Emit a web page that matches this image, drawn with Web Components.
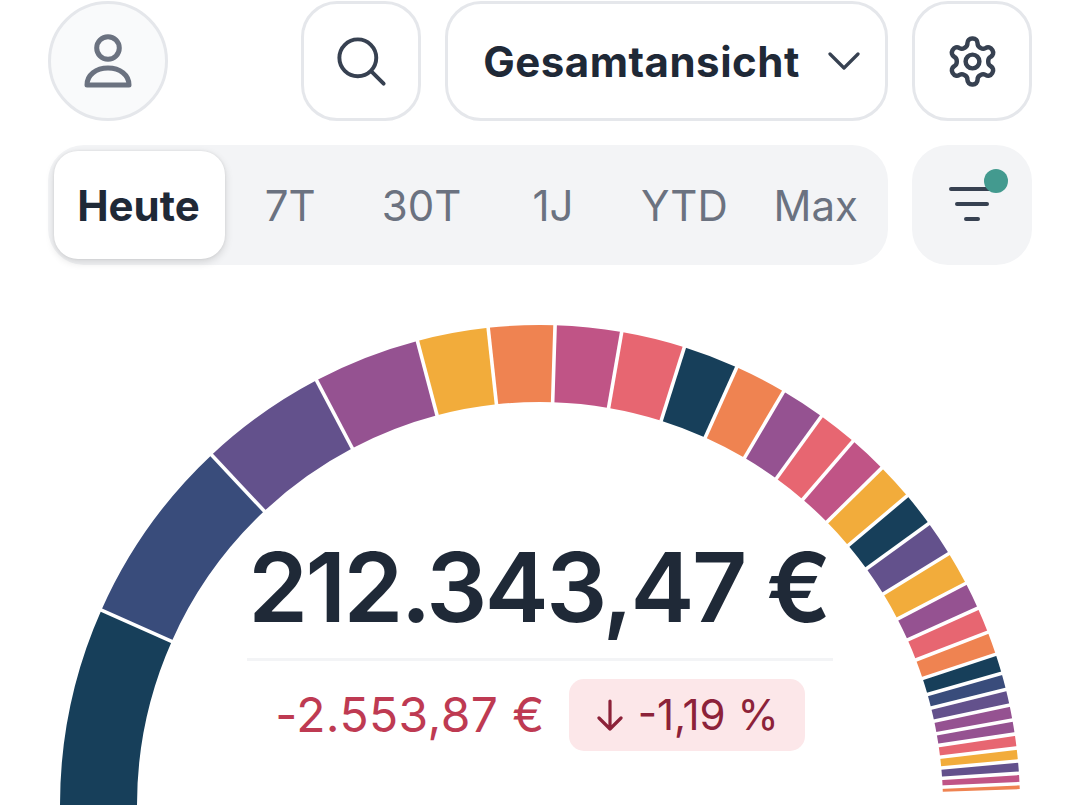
<!DOCTYPE html>
<html lang="de"><head><meta charset="utf-8"><title>Gesamtansicht</title>
<style>
html,body{margin:0;padding:0;background:#fff;overflow:hidden}
body{font-family:Inter,"Liberation Sans",sans-serif;color:#1f2937}
</style></head><body>
<portfolio-app>
  <top-bar></top-bar>
  <range-bar></range-bar>
  <value-gauge amount="212.343,47 €" delta="-2.553,87 €" percent="-1,19 %"></value-gauge>
</portfolio-app>
<script>
function shadow(el, html){ el.attachShadow({mode:'open'}).innerHTML = html; }

customElements.define('portfolio-app', class extends HTMLElement{
  constructor(){super();shadow(this,`<style>:host{display:flex;flex-direction:column;width:1079px;height:806px;overflow:hidden;padding-top:1px;box-sizing:border-box}</style><slot></slot>`);}
});

customElements.define('square-button', class extends HTMLElement{
  constructor(){super();shadow(this,`<style>
  :host{display:flex;align-items:center;justify-content:center;position:relative;width:120px;height:120px;box-sizing:border-box;border:3px solid #e5e7eb;border-radius:36px;background:#fff;color:#374151;flex:none}
  :host([round]){border-radius:50%;background:#f9fafb;color:#6b7280}
  :host([filled]){border:0;background:#f3f4f6}
  :host([wide]){width:443px;gap:28px;padding-left:10px}
  </style><slot></slot>`);}
});

customElements.define('top-bar', class extends HTMLElement{
  constructor(){super();shadow(this,`<style>
  :host{display:flex;gap:24px;padding:0 47px 0 48px;align-items:center}
  .sp{flex:1}
  svg{display:block;fill:none;stroke:currentColor;stroke-linecap:round;stroke-linejoin:round}
  .t{font:700 42px/1 Inter,sans-serif;color:#1f2937;letter-spacing:.5px;white-space:nowrap;position:relative;top:1px}
  </style>
  <square-button round><svg width="64" height="64" viewBox="0 0 64 64" stroke-width="5"><circle cx="32" cy="19" r="11.3"/><path d="M11 56C11 46 20 39 32 39S53 46 53 56Z"/></svg></square-button>
  <div class="sp"></div>
  <square-button><svg width="59" height="59" viewBox="0 0 24 24" stroke-width="1.6"><path d="M21 21l-5.197-5.197m0 0A7.5 7.5 0 105.196 5.196a7.5 7.5 0 0010.607 10.607z"/></svg></square-button>
  <square-button wide><span class="t">Gesamtansicht</span><svg width="32" height="20" viewBox="0 0 32 20" stroke-width="3.2"><path d="M2 3L16 17L30 3"/></svg></square-button>
  <square-button><svg width="55" height="55" viewBox="0 0 24 24" stroke-width="1.95"><path d="M12.22 2h-.44a2 2 0 0 0-2 2v.18a2 2 0 0 1-1 1.73l-.43.25a2 2 0 0 1-2 0l-.15-.08a2 2 0 0 0-2.73.73l-.22.38a2 2 0 0 0 .73 2.73l.15.1a2 2 0 0 1 1 1.72v.51a2 2 0 0 1-1 1.74l-.15.09a2 2 0 0 0-.73 2.73l.22.38a2 2 0 0 0 2.73.73l.15-.08a2 2 0 0 1 2 0l.43.25a2 2 0 0 1 1 1.73V20a2 2 0 0 0 2 2h.44a2 2 0 0 0 2-2v-.18a2 2 0 0 1 1-1.73l.43-.25a2 2 0 0 1 2 0l.15.08a2 2 0 0 0 2.73-.73l.22-.39a2 2 0 0 0-.73-2.73l-.15-.08a2 2 0 0 1-1-1.74v-.5a2 2 0 0 1 1-1.74l.15-.09a2 2 0 0 0 .73-2.73l-.22-.38a2 2 0 0 0-2.73-.73l-.15.08a2 2 0 0 1-2 0l-.43-.25a2 2 0 0 1-1-1.73V4a2 2 0 0 0-2-2z"/><circle cx="12" cy="12" r="3"/></svg></square-button>`);}
});

customElements.define('range-bar', class extends HTMLElement{
  constructor(){super();shadow(this,`<style>
  :host{display:flex;gap:24px;padding:0 47px 0 48px;margin-top:24px}
  .seg{flex:1;display:flex;height:120px;box-sizing:border-box;padding:6px;background:#f3f4f6;border-radius:36px;font:400 42px/1 Inter,sans-serif;color:#6b7280}
  .seg span{flex:1;display:flex;align-items:center;justify-content:center;white-space:nowrap;padding:2px 1px 0 0}
  .seg .on{flex:none;width:171px;padding-right:2px;box-sizing:border-box;background:#fff;border-radius:24px;color:#1f2937;font-weight:700;box-shadow:0 3px 9px rgba(0,0,0,.14),0 0 3px rgba(0,0,0,.08)}
  .ico{position:relative}
  svg{display:block;fill:none;stroke:#374151;stroke-width:4;stroke-linecap:round}
  .dot{position:absolute;left:72px;top:24px;width:24px;height:24px;border-radius:50%;background:#439a8f}
  </style>
  <div class="seg"><span class="on">Heute</span><span>7T</span><span>30T</span><span>1J</span><span>YTD</span><span>Max</span></div>
  <square-button filled class="ico"><svg width="48" height="40" viewBox="0 0 48 40"><path d="M3 4H45M9 19H39M18 34H30"/></svg><i class="dot"></i></square-button>`);}
});

customElements.define('value-gauge', class extends HTMLElement{
  constructor(){super();
    const a=[0,23.95,46.83,62.25,75.2,83.8,91.8,99.8,107.5,114.2,120.5,125.9,130.7,135.4,139.9,144.1,148.4,152.5,155.8,158.9,161.7,164.08,166.06,167.98,169.8,171.5,173.18,174.74,176.21,177.45,178.1];
    const N='#173f5a',B='#394c7b',P='#63518c',M='#955291',Y='#f2ac3b',O='#ef8351',K='#c05486',C='#e76671';
    const col=[N,B,P,M,Y,O,K,C,N,O,M,C,K,Y,N,P,Y,M,C,O,N,B,P,M,M,C,Y,P,K,O];
    const cx=540,cy=805,R=480,r=403,pt=(rad,d)=>{const t=d*Math.PI/180;return (cx-rad*Math.cos(t)).toFixed(2)+' '+(cy-rad*Math.sin(t)).toFixed(2)};
    const segs=col.map((c,i)=>`<path fill="${c}" d="M${pt(r,a[i])}L${pt(R,a[i])}A${R} ${R} 0 0 1 ${pt(R,a[i+1])}L${pt(r,a[i+1])}A${r} ${r} 0 0 0 ${pt(r,a[i])}Z"/>`).join('');
    const seps=a.slice(1,-1).map(d=>`<path d="M${pt(r-3,d)}L${pt(R+3,d)}"/>`).join('');
    const g=n=>this.getAttribute(n);
    shadow(this,`<style>
    :host{display:grid;flex:1;min-height:0}
    :host>*{grid-area:1/1}
    svg.arc{display:block;width:1079px;height:541px}
    svg.arc g path{stroke:#fff;stroke-width:3.6;fill:none}
    .c{display:flex;flex-direction:column;align-items:center;padding:274px 0 0 0}
    .amt{font:600 96px/96px Inter,sans-serif;color:#1f2937;white-space:nowrap;letter-spacing:-2.6px;margin-left:-2px}
    .div{width:586px;height:3px;background:#f3f4f6;margin:23px 0 0 1px}
    .row{display:flex;align-items:center;gap:24px;margin:18px 0 0 1px}
    .d{font:400 48px/1 Inter,sans-serif;letter-spacing:.4px;color:#be3a52;white-space:nowrap}
    .b{display:flex;align-items:center;gap:15px;height:72px;padding:0 26px 0 28px;box-sizing:border-box;background:#fce7e9;border-radius:15px;font:400 42px/1 Inter,sans-serif;color:#8c2239;white-space:nowrap}
    .b svg{display:block;fill:none;stroke:currentColor;stroke-width:3.2;stroke-linecap:round;stroke-linejoin:round}
    </style>
    <svg class="arc" viewBox="0 265 1079 541">${segs}<g>${seps}</g></svg>
    <div class="c"><div class="amt">${g('amount')}</div><div class="div"></div>
      <div class="row"><span class="d">${g('delta')}</span><span class="b"><svg width="26" height="32" viewBox="0 0 26 32"><path d="M13 2V30M2 19L13 30L24 19"/></svg><span>${g('percent')}</span></span></div></div>`);
  }
});
</script>
</body></html>
